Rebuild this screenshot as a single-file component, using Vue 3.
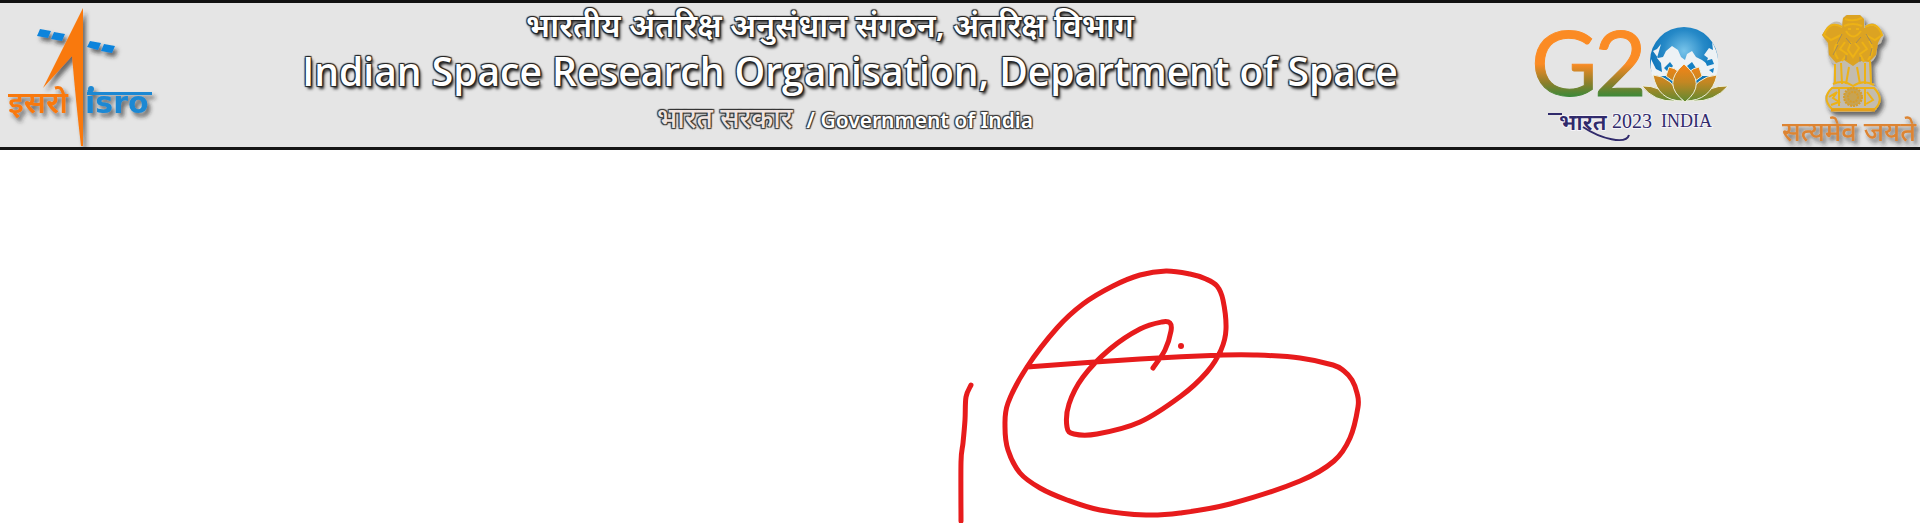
<script setup>
const smooth = (points) => {
  let d = `M${points[0][0]} ${points[0][1]}`
  for (let i = 0; i < points.length - 1; i++) {
    const p0 = points[i - 1] || points[i]
    const p1 = points[i]
    const p2 = points[i + 1]
    const p3 = points[i + 2] || p2
    const c1 = [p1[0] + (p2[0] - p0[0]) / 6, p1[1] + (p2[1] - p0[1]) / 6]
    const c2 = [p2[0] - (p3[0] - p1[0]) / 6, p2[1] - (p3[1] - p1[1]) / 6]
    d += ` C${c1[0].toFixed(1)} ${c1[1].toFixed(1)} ${c2[0].toFixed(1)} ${c2[1].toFixed(1)} ${p2[0]} ${p2[1]}`
  }
  return d
}

const strokes = [
  [[971, 385], [966, 397], [965, 420], [963, 443], [961, 462], [961, 521]],
  [
    [1153, 368], [1165, 350], [1171, 331], [1170, 323], [1162, 322], [1140, 329], [1110, 349],
    [1083, 377], [1069, 404], [1067, 427], [1074, 434], [1097, 434], [1140, 422], [1181, 396],
    [1207, 372], [1221, 350], [1226, 329], [1223, 300], [1217, 286], [1206, 279], [1190, 274], [1166, 271],
    [1140, 275], [1113, 286], [1083, 304], [1057, 328], [1027, 367], [1008, 403], [1005, 427],
    [1008, 450], [1020, 473], [1040, 488], [1067, 500], [1100, 510], [1146, 515], [1180, 513],
    [1230, 504], [1300, 481], [1334, 461], [1350, 438], [1358, 407], [1357, 393], [1352, 380], [1344, 371], [1333, 365],
    [1300, 358], [1257, 355], [1223, 355], [1140, 359], [1027, 367],
  ],
].map(smooth)
</script>

<template>
  <div class="page">
    <header class="banner">
      <svg class="isro" viewBox="0 3 166 144" role="img" aria-label="ISRO">
        <defs>
          <filter id="drop" x="-20%" y="-20%" width="150%" height="150%">
            <feDropShadow dx="3" dy="4" stdDeviation="2" flood-color="#222" flood-opacity=".65" />
          </filter>
        </defs>
        <g filter="url(#drop)">
          <path d="M40 29 51 31 48 38 37 36ZM54 32 65 34 62 41 51 39ZM90 41 101 43 98 50 87 47ZM104 44 115 46 112 53 101 51Z" fill="#0f84dc" />
          <path d="M83 8V146H81Q76 103 72 56L43 88Z" fill="#f9790f" />
          <text x="8" y="113" class="isro-hi">इसरो</text>
          <path d="M87 92H152V95H87Z" fill="#1b88d3" />
          <circle cx="91" cy="89" r="3" fill="#1b88d3" />
          <text x="85" y="113" class="isro-en">isro</text>
        </g>
      </svg>

      <div class="titles">
        <p class="hindi">भारतीय अंतरिक्ष अनुसंधान संगठन, अंतरिक्ष विभाग</p>
        <h1>Indian Space Research Organisation, Department of Space</h1>
        <p class="gov"><span class="gov-hi">भारत सरकार</span><span>/ Government of India</span></p>
      </div>

      <svg class="g20" viewBox="1524 3 210 144" role="img" aria-label="G20 भारत 2023 INDIA">
        <defs>
          <linearGradient id="flag" gradientUnits="userSpaceOnUse" x1="0" y1="30" x2="0" y2="98">
            <stop offset=".5" stop-color="#fb8b24" /><stop offset=".78" stop-color="#8b7f2b" /><stop offset="1" stop-color="#338a3b" />
          </linearGradient>
          <linearGradient id="petal" gradientUnits="userSpaceOnUse" x1="0" y1="66" x2="0" y2="102">
            <stop offset="0" stop-color="#f28417" /><stop offset=".45" stop-color="#c38722" /><stop offset="1" stop-color="#5d8a32" />
          </linearGradient>
          <radialGradient id="globe" cx=".5" cy=".35" r=".55">
            <stop offset="0" stop-color="#78c4ea" /><stop offset=".55" stop-color="#2689c7" /><stop offset="1" stop-color="#0871b8" />
          </radialGradient>
        </defs>
        <text x="1531 1594" y="96" class="g2" fill="url(#flag)" stroke="url(#flag)">G2</text>
        <circle cx="1684" cy="61" r="34" fill="url(#globe)" />
        <path d="M1661 44 1657 49 1653 51 1658 58 1663 57 1666 51 1672 46 1678 50 1681 57 1685 60 1687 54 1692 51 1696 57 1702 60 1706 63 1708 58 1704 55 1709 48 1713 50 1712 42Q1722 59 1716 76L1652 76Q1650 67 1651 59L1656 69 1662 72 1661 63 1657 58Z" fill="#edf2f5" />
        <path d="M1705 61 1712 59 1714 64 1707 66ZM1709 70 1714 68 1713 73ZM1687 66 1692 62 1696 68 1692 73ZM1664 68 1670 62 1673 66 1668 72Z" fill="#1480c4" />
        <g fill="url(#petal)" stroke="#eef0dd" stroke-width="1">
          <path d="M1669 67Q1675 68 1679 72L1677 84 1666 76Z" />
          <path d="M1699 67Q1693 68 1689 72L1691 84 1702 76Z" />
          <path d="M1642 86Q1660 85 1675 101Q1654 102 1642 86Z" />
          <path d="M1728 86Q1708 85 1693 101Q1714 102 1728 86Z" />
          <path d="M1653 75Q1672 76 1683 101Q1658 101 1653 75Z" />
          <path d="M1717 75Q1696 76 1685 101Q1711 101 1717 75Z" />
          <path d="M1684 64Q1708 84 1685 102Q1661 84 1684 64Z" />
        </g>
        <g class="g20-caption">
          <path d="M1548 114H1562" class="swash" />
          <text x="1559" y="130" class="bharat">भारत</text>
          <path d="M1583 127C1601 139 1626 145 1629 135" class="swash" />
          <text x="1612" y="128" class="year">2023</text>
          <text x="1661" y="127" class="india">INDIA</text>
        </g>
      </svg>

      <svg class="emblem" viewBox="1774 3 146 144" role="img" aria-label="सत्यमेव जयते">
        <g filter="url(#drop)">
          <path d="M1843 18 1846 15H1860L1864 19 1865 26Q1874 19 1879 29L1884 35 1881 43 1876 46Q1879 57 1870 63L1871 84 1877 88Q1882 98 1876 110L1870 112H1835Q1824 109 1825 96L1833 86 1834 64Q1826 58 1828 46L1822 35 1827 27Q1836 18 1842 24Z" fill="#c3bcae" />
          <path d="M1843 18 1847 15H1860L1864 19 1864 28Q1877 21 1882 35L1878 43 1876 55 1869 62 1860 61 1853 66 1844 60 1836 63 1829 55 1828 43 1822 35Q1831 19 1842 28Z" fill="#dca324" />
          <g fill="none" stroke="#edb214" stroke-width="2">
            <path d="M1845 19Q1853 22 1862 18M1844 26Q1853 22 1862 26M1846 31Q1853 42 1861 31M1848 29H1851M1856 29H1859" />
            <path d="M1842 27Q1829 20 1824 35L1831 40 1841 35M1865 27Q1877 20 1882 35L1875 40 1866 35" />
            <path d="M1839 41Q1831 49 1838 59M1869 41Q1876 50 1868 60M1845 42 1840 49 1847 54 1842 61M1862 42 1867 49 1860 54 1864 62M1851 42 1848 50 1853 57 1859 48 1855 43" />
            <path d="M1835 64V83M1841 63 1842 84M1849 67 1846 84M1857 67 1860 84M1865 63 1865 84M1870 61 1871 84" />
            <path d="M1833 84Q1843 79 1853 86 1863 79 1874 85M1832 88H1874Q1885 99 1875 109H1832Q1821 98 1832 88ZM1829 97 1837 92 1833 98 1839 102 1831 105M1867 92 1873 100 1866 104M1839 87V106M1865 87V106" />
          </g>
          <circle cx="1853" cy="97" r="9" class="wheel" />
          <circle cx="1853" cy="97" r="5" class="wheel" />
          <path d="M1831 110H1875" stroke="#e4a01d" stroke-width="3" />
          <path d="M1833 55 1838 45M1842 34 1837 44M1866 34 1872 44M1870 56 1872 48M1846 38 1851 44M1861 37 1856 43M1846 55V60M1860 57V62" stroke="#a68b54" stroke-width="1" />
          <text x="1782" y="141" class="motto">सत्यमेव जयते</text>
        </g>
      </svg>
    </header>

    <main>
      <svg class="ink" viewBox="0 150 1920 373" aria-hidden="true">
        <path v-for="(d, i) in strokes" :key="i" :d="d" />
        <circle cx="1181" cy="346" r="3" />
      </svg>
    </main>
  </div>
</template>

<style>
body { margin: 0; background: #fff; }
</style>

<style scoped>
.page { overflow: hidden; }
.banner {
  display: flex;
  align-items: stretch;
  background: #e5e5e5;
  border-top: 3px solid #111;
  border-bottom: 3px solid #151515;
}
.isro, .g20, .emblem { flex: none; height: 144px; display: block; }
.isro { width: 166px; }
.g20 { width: 210px; margin-right: 40px; }
.emblem { width: 146px; }
.isro-hi { font: 600 31px "Noto Sans", sans-serif; fill: #f9790f; }
.isro-en { font: 700 30px "DejaVu Sans", sans-serif; fill: #1b88d3; }
.g2 { font: 400 91px Lato, sans-serif; stroke-width: 1px; }
.g20-caption { fill: #302a6b; stroke: #f5f3f8; stroke-width: 2px; }
.g20-caption text { paint-order: stroke; }
.g20-caption .swash { fill: none; stroke: #302a6b; stroke-width: 2px; }
.bharat { font: 600 23px "Noto Sans", sans-serif; }
.year { font: 400 20px "Liberation Serif", serif; }
.india { font: 400 18px "Liberation Serif", serif; }
.wheel { fill: #c7a353; stroke: #d79d2a; stroke-width: 2px; stroke-dasharray: 2 1; }
.motto { font: 500 27px "Noto Sans", sans-serif; fill: #dd8431; }
.titles {
  flex: 1;
  min-width: 0;
  display: flex;
  flex-direction: column;
  align-items: center;
  padding-left: 10px;
  white-space: nowrap;
  color: #fff;
  font-family: "Noto Sans", "Open Sans", sans-serif;
  text-shadow: -1px -1px 1px #222, 1px -1px 1px #222, -1px 1px 1px #222, 1px 1px 1px #222, 2px 3px 3px #222;
}
.titles p, .titles h1 { margin: 0; }
.titles .hindi { font-size: 32px; font-weight: 600; line-height: 44px; padding-right: 40px; }
h1 { font: 600 39px/48px "Open Sans", sans-serif; }
.titles .gov {
  display: flex;
  align-items: baseline;
  gap: 14px;
  padding-right: 10px;
  font: 600 21px/44px "Noto Sans", sans-serif;
  text-shadow: -1px -1px 1px #333, 1px -1px 1px #333, -1px 1px 1px #333, 1px 1px 1px #333;
}
.gov-hi { color: #efe3df; font-size: 28px; font-weight: 500; }
.ink { display: block; width: 100%; }
.ink path { fill: none; stroke: #e71b1c; stroke-width: 5px; stroke-linecap: round; stroke-linejoin: round; }
.ink circle { fill: #e71b1c; }
</style>
